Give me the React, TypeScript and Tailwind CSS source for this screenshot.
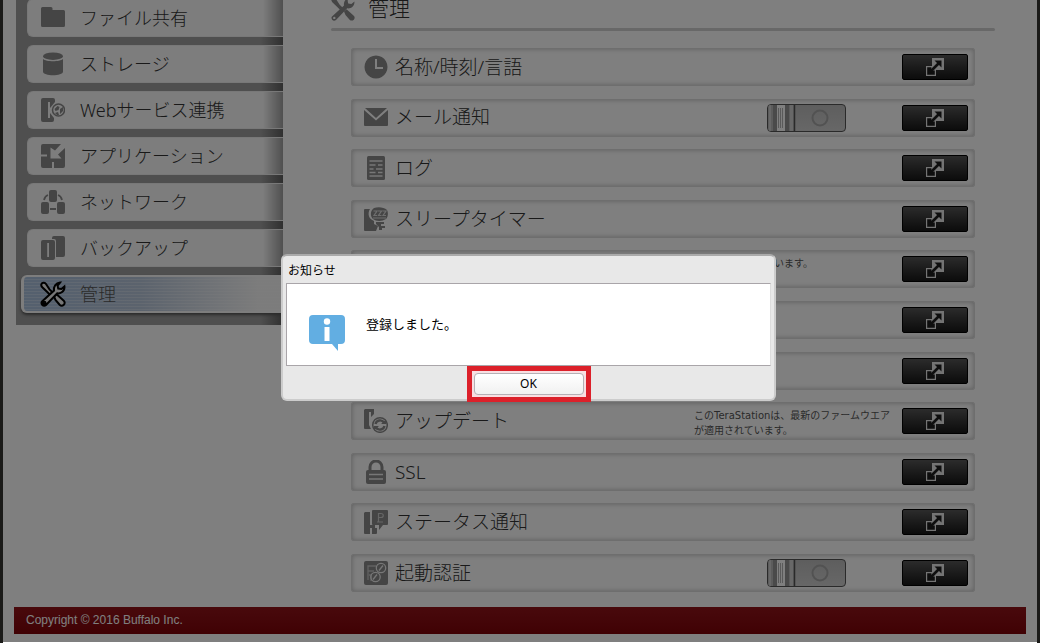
import type { ReactNode } from "react";
import clsx from "clsx";

type IconName =
  | "folder"
  | "storage"
  | "web"
  | "app"
  | "network"
  | "backup"
  | "tools"
  | "clock"
  | "mail"
  | "log"
  | "sleep"
  | "update"
  | "lock"
  | "status"
  | "auth";

const wrench =
  "M1 19.500L13 8.600C12.300 5 14.700.9 19 .6L16.600 3.600l.6 3 3.200.4L23.400 4.400C24 9 20 12 16.200 11.300L5 23c-1 1-2.700 1-3.600.1S.100 20.400 1 19.500z";

const icons: Record<IconName, ReactNode> = {
  folder: <path d="M0 2.500A1.500 1.500 0 0 1 1.500 1H10a1.500 1.500 0 0 1 1.500 1.500V4h11A1.500 1.500 0 0 1 24 5.500v14a1.500 1.500 0 0 1-1.500 1.500h-21A1.500 1.500 0 0 1 0 19.500z" />,
  storage: (
    <>
      <ellipse cx="12" cy="4.200" rx="10" ry="3.700" />
      <path d="M2 7c3 3 17 3 20 0v12.500c0 5-20 5-20 0z" />
    </>
  ),
  web: (
    <>
      <path d="M2 0h10a2 2 0 0 1 2 2v2L9 10V4H7v16h2v-5l4 5v2a2 2 0 0 1-2 2H2a2 2 0 0 1-2-2V2a2 2 0 0 1 2-2z" />
      <circle cx="17.500" cy="12" r="6" fill="none" stroke="currentColor" strokeWidth="1.500" />
      <path d="M13.500 11l3-3 2 1-1 3-3 1zM19 11l3-2v4l-3 3zM14 15l3-1 1 3-2 0z" />
    </>
  ),
  app: (
    <path d="M2 0h18l-6 6.500-4.500-3v11h11l-3.500-4L24 4v18a2 2 0 0 1-2 2h-9v-6h-2v6H2a2 2 0 0 1-2-2v-9.500h6v-2H0V2a2 2 0 0 1 2-2z" />
  ),
  network: (
    <>
      <rect x="8" width="8" height="12" rx="2" />
      <rect y="12" width="8" height="12" rx="2" />
      <rect x="16" y="12" width="8" height="12" rx="2" />
      <path d="M3 10q1-4 4-5M21 10q-1-4-4-5M9 19h6" fill="none" stroke="currentColor" strokeWidth="1.800" />
    </>
  ),
  backup: (
    <>
      <path d="M11 2a2 2 0 0 1 2-2h9a2 2 0 0 1 2 2v17a2 2 0 0 1-2 2h-7V5a2 2 0 0 0-2-2h-2z" />
      <path fillRule="evenodd" d="M2 4h10a2 2 0 0 1 2 2v16a2 2 0 0 1-2 2H2a2 2 0 0 1-2-2V6a2 2 0 0 1 2-2zm4.200 3v14h1.800V7z" />
    </>
  ),
  tools: (
    <>
      <path d="M.8 1.500C2 .2 4 .6 5 2l3.500 5.400 3 3-2.500 2.400-3-3L1.300 5.200C.2 4 0 2.500.8 1.500zM13 14.500l2.500-2.300 2 1.800 5 4.500c1.500 1.300 1.500 3 .3 4.200s-3 1.200-4.200 0L14.500 18z" />
      <path fillRule="evenodd" d={wrench + "M3.300 19.700a1.200 1.200 0 1 0 .01 2.400 1.200 1.200 0 0 0 0-2.400z"} />
    </>
  ),
  clock: <path fillRule="evenodd" d="M12 .5a11.500 11.500 0 1 0 .01 0zM11 4h2v8h6v2h-8z" />,
  mail: (
    <>
      <path d="M0 4L12 14.500 24 4v15a1 1 0 0 1-1 1H1a1 1 0 0 1-1-1z" />
      <path d="M1 2h22L12 12z" />
    </>
  ),
  log: (
    <>
      <rect x="3" width="18" height="24" rx="1.500" />
      <path d="M5.500 5h13M5.500 9h6M14 9h4.500M5.500 13h4M12 13h6.500M5.500 16.500h6M14 16.500h4.500M5.500 20h13" stroke="#eee" strokeWidth="1.300" />
    </>
  ),
  sleep: (
    <>
      <path d="M1 2h5C3 7 5 12 10 14v3l4 2-2 5H1a1 1 0 0 1-1-1V3a1 1 0 0 1 1-1z" />
      <path d="M10 1c4-1.500 10-1 13 2 1.500 3 1 7-1 9-4 2.500-10 2.500-13 0C6 9 6 4 10 1z" />
      <path d="M9.500 4h3.500l-3 4.500h3M14 4h3.500l-3 4.500h3M18.500 4H22l-3 4.500h3M9 11h13" stroke="#ddd" fill="none" strokeWidth="1.200" />
      <path d="M12 15h8v2h-3v2h4v2h-3v2h-3v-3l-3-3z" />
    </>
  ),
  update: (
    <>
      <path d="M1 0h9v5L7 8V3H5v13l2 4H1a1 1 0 0 1-1-1V1z" />
      <circle cx="16" cy="16" r="7.300" fill="none" stroke="currentColor" strokeWidth="1.500" />
      <path d="M11.500 15a4.700 4.700 0 0 1 8.500-1.500M20.500 17a4.700 4.700 0 0 1-8.500 1.500" stroke="currentColor" fill="none" strokeWidth="2.400" />
      <path d="M22 10.500V15h-5zM10 21.500V17h5z" />
    </>
  ),
  lock: (
    <>
      <path d="M6 11V7a6 6 0 0 1 12 0v4" fill="none" stroke="currentColor" strokeWidth="3" />
      <rect x="2" y="10" width="20" height="14" rx="2" />
      <path d="M5 14.500h14M5 19h14" stroke="#eee" strokeWidth="1.500" />
    </>
  ),
  status: (
    <>
      <path d="M1 2h5v13h5v3h2v5a1 1 0 0 1-1 1H8v-6H6v6H1a1 1 0 0 1-1-1V3z" />
      <path d="M9 0h14a1 1 0 0 1 1 1v13a1 1 0 0 1-1 1h-4l-4 5v-5H9a1 1 0 0 1-1-1V1a1 1 0 0 1 1-1z" />
      <path d="M13 12h6M14.500 12V3.500H17c3 0 3 4 0 4h-2.500" stroke="#ccc" fill="none" strokeWidth="1.200" />
    </>
  ),
  auth: (
    <>
      <rect width="24" height="24" rx="2" />
      <path d="M4 19V5h8M4 10h6M5 14h2v6" stroke="#c4c4c4" fill="none" strokeWidth="1.300" />
      <circle cx="17" cy="7" r="4.700" stroke="#eee" fill="none" strokeWidth="1.300" />
      <circle cx="11.500" cy="16" r="4.700" stroke="#eee" fill="none" strokeWidth="1.300" />
      <path d="M19 4.500l-4 5M13 13.500l-4 5" stroke="#eee" strokeWidth="1.300" />
    </>
  ),
};

function Icon({ name, className }: { name: IconName; className?: string }) {
  return (
    <svg viewBox="0 0 24 24" aria-hidden="true" className={clsx("size-6 shrink-0 fill-current", className)}>
      {icons[name]}
    </svg>
  );
}

const menu: { label: string; icon: IconName }[] = [
  { label: "ファイル共有", icon: "folder" },
  { label: "ストレージ", icon: "storage" },
  { label: "Webサービス連携", icon: "web" },
  { label: "アプリケーション", icon: "app" },
  { label: "ネットワーク", icon: "network" },
  { label: "バックアップ", icon: "backup" },
];

type Setting = {
  id: number;
  label?: string;
  icon?: IconName;
  toggle?: boolean;
  note?: string;
  shortNote?: boolean;
};

const settings: Setting[] = [
  { id: 1, label: "名称/時刻/言語", icon: "clock" },
  { id: 2, label: "メール通知", icon: "mail", toggle: true },
  { id: 3, label: "ログ", icon: "log" },
  { id: 4, label: "スリープタイマー", icon: "sleep" },
  { id: 5, note: "います。", shortNote: true },
  { id: 6 },
  { id: 7 },
  {
    id: 8,
    label: "アップデート",
    icon: "update",
    note: "このTeraStationは、最新のファームウエアが適用されています。",
  },
  { id: 9, label: "SSL", icon: "lock" },
  { id: 10, label: "ステータス通知", icon: "status" },
  { id: 11, label: "起動認証", icon: "auth", toggle: true },
];

function Sidebar() {
  return (
    <nav className="-mt-0.5 flex w-[267px] shrink-0 flex-col gap-2 self-start bg-[linear-gradient(to_right,#9e9e9e_245px,#606060)] pt-px pb-3">
      {menu.map((item) => (
        <a
          key={item.label}
          href="#"
          className="ml-[11px] flex h-[38px] items-center gap-[15px] rounded-l-md border-y border-l border-[#f0f0f0] bg-[linear-gradient(to_right,#fafafa_calc(100%_-_20px),#a0a0a0)] pl-[13px] text-lg font-light text-[#333]"
        >
          <Icon name={item.icon} className="text-[#8a8a8a]" />
          {item.label}
        </a>
      ))}
      <a
        href="#"
        aria-current="page"
        className="ml-[5px] flex h-[38px] items-center rounded-l-md border-y-2 border-l-3 border-[#fafafa] bg-[repeating-linear-gradient(to_bottom,transparent_0_2px,#ffffff40_2px_3px),linear-gradient(to_right,#a9c0dd,#b7c6da_45%,#f8f8f8_90%)] pl-[15px] text-lg font-light text-[#555] shadow-[0_2px_3px_#555]"
      >
        <svg viewBox="-2 -2 28 28" aria-hidden="true" className="mr-[13px] size-7 shrink-0 fill-[#eee] stroke-black stroke-2">
          {icons.tools}
        </svg>
        管理
      </a>
    </nav>
  );
}

function Toggle({ label }: { label: string }) {
  return (
    <label className="relative mr-14 flex h-7 w-[79px] overflow-hidden rounded-sm border border-[#555] bg-linear-to-b from-[#bcbcbc] to-[#cfcfcf]">
      <input type="checkbox" className="sr-only" aria-label={label} />
      <svg viewBox="0 0 77 26" aria-hidden="true" className="w-full">
        <rect width="27" height="26" fill="#b8b8b8" />
        <rect x="1" width="2" height="26" fill="#d0d0d0" />
        <rect x="5" width="4" height="26" fill="#959595" />
        <rect x="9" width="8" height="26" fill="#fff" />
        <path d="M10.500 3v20M12.500 3v20M14.500 3v20" stroke="#b5b5b5" />
        <rect x="17" width="4" height="26" fill="#959595" />
        <rect x="22" width="3" height="26" fill="#d0d0d0" />
        <path d="M26.500 0v26" stroke="#555" strokeWidth="1.500" />
        <circle cx="52" cy="13" r="7.500" fill="none" stroke="#a5a5a5" strokeWidth="2" />
      </svg>
    </label>
  );
}

function OpenButton({ label }: { label: string }) {
  return (
    <button
      type="button"
      aria-label={label}
      className="flex h-[26px] w-[66px] shrink-0 items-center justify-center rounded-xs border border-black bg-linear-to-b from-[#585858] to-[#181818]"
    >
      <svg viewBox="0 0 18 18" aria-hidden="true" className="size-[18px]">
        <path d="M6 0h12v12H6z" fill="#e8e8e8" />
        <path d="M.6 8.600h5.400V12h3.400v5.400H.6z" fill="#1c1c1c" stroke="#e8e8e8" strokeWidth="1.200" />
        <path d="M4.500 13.500l8.500-8.500" stroke="#1c1c1c" strokeWidth="2.600" />
        <path d="M8.500 2.500h7v7z" fill="#1c1c1c" />
      </svg>
    </button>
  );
}

function SettingRow({ item }: { item: Setting }) {
  return (
    <li className="flex h-[38px] items-center rounded-xs border border-[#ddd] pr-1.5 pl-3 shadow-[inset_0_0_5px_#bbb]">
      {item.icon && <Icon name={item.icon} className="text-[#8a8a8a]" />}
      {item.label && <h2 className="ml-[7px] text-[19px] font-light text-[#333]">{item.label}</h2>}
      <div className="ml-auto flex items-center">
        {item.note && (
          <p className="h-[26px] w-52 pr-2 font-['DejaVu_Sans','Noto_Sans_CJK_JP',sans-serif] text-[10px] leading-[15px] text-[#555]">
            <span className={clsx("block", item.shortNote && "w-[119px] text-right")}>{item.note}</span>
          </p>
        )}
        {item.toggle && <Toggle label={item.label ?? ""} />}
        <OpenButton label={item.label ?? "設定"} />
      </div>
    </li>
  );
}

function NoticeDialog() {
  return (
    <div
      role="dialog"
      aria-labelledby="notice-title"
      className="w-[495px] rounded-md border-2 border-t-[#aaa] border-[#ccc] bg-[#e8e8e8] px-[3px] text-black"
    >
      <h2 id="notice-title" className="flex h-[27px] items-center pt-1 pl-0.5 text-xs">
        お知らせ
      </h2>
      <div className="flex h-[83px] items-center border border-r-[#ddd] border-[#a9a5a9] bg-white pt-0.5 pl-[22px]">
        <svg viewBox="0 0 36 36" aria-hidden="true" className="mt-4 size-9">
          <path d="M4 0h28a4 4 0 0 1 4 4v21a4 4 0 0 1-4 4h-3v7l-6-7H4a4 4 0 0 1-4-4V4a4 4 0 0 1 4-4z" fill="#62aee2" />
          <circle cx="18" cy="6.500" r="3.200" fill="#fff" />
          <path d="M15.500 12h5v14h-5z" fill="#fff" />
        </svg>
        <p className="ml-[21px] text-[13px]">登録しました。</p>
      </div>
      <div className="flex h-[33px] justify-center">
        <div className="h-9 w-[124px] border-5 border-[#dc202a] bg-[#f8dfe2] p-0.5">
          <button
            type="button"
            className="flex size-full items-center justify-center rounded-sm border border-[#b5b0b5] bg-linear-to-b from-white to-[#f1f1f1] text-xs"
          >
            OK
          </button>
        </div>
      </div>
    </div>
  );
}

export default function App() {
  return (
    <div className="relative flex min-h-screen flex-col overflow-hidden border-x-3 border-[#1a1a18] bg-white font-['Noto_Sans','Noto_Sans_CJK_JP',sans-serif]">
      <div className="flex flex-1 pl-[13px]">
        <Sidebar />
        <main className="flex flex-1 flex-col pr-[42px] pl-12">
          <header className="h-7">
            <h1 className="flex h-[18px] items-center gap-[13px] text-[21px] font-light text-[#333]">
              <Icon name="tools" className="text-[#8a8a8a]" />
              管理
            </h1>
          </header>
          <hr className="h-[3px] rounded-sm border-0 bg-[#d0d0d0]" />
          <ul className="mx-5 mt-[17px] flex flex-1 flex-col justify-between">
            {settings.map((item) => (
              <SettingRow key={item.id} item={item} />
            ))}
          </ul>
        </main>
      </div>
      <footer className="mx-[11px] mt-[15px] mb-[9px] flex h-[27px] items-center bg-linear-to-b from-[#921319] to-[#800308] px-3 pb-0.5 font-['Liberation_Sans',sans-serif] text-xs text-white">
        Copyright © 2016 Buffalo Inc.
      </footer>
      <div className="absolute inset-x-0 top-0 bottom-px flex items-center justify-center bg-black/50 pt-3 pl-[17px]">
        <NoticeDialog />
      </div>
    </div>
  );
}
